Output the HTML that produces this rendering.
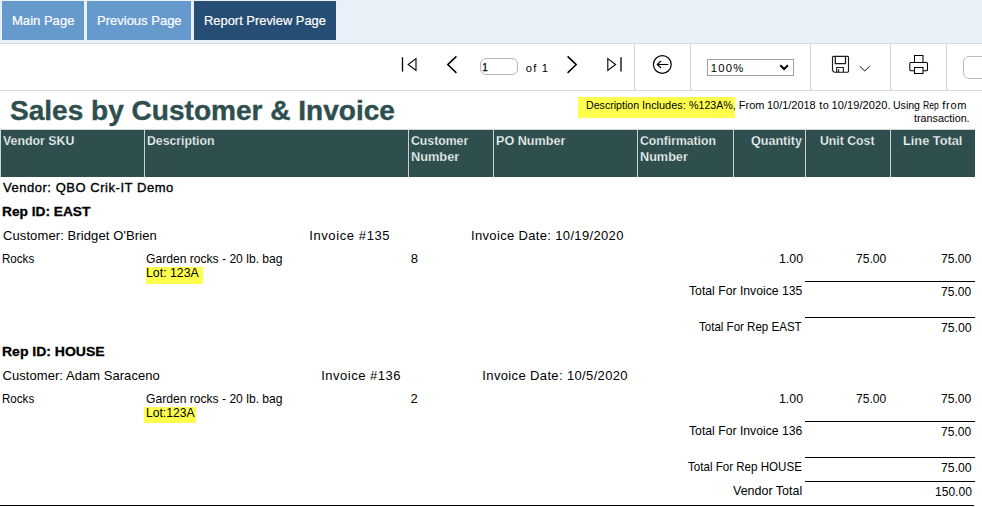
<!DOCTYPE html>
<html><head><meta charset="utf-8">
<style>
html,body{margin:0;padding:0;}
body{width:982px;height:507px;overflow:hidden;background:#fff;position:relative;font-family:"Liberation Sans",sans-serif;color:#000;}
.a{position:absolute;}
.t{position:absolute;white-space:pre;}
.tab{position:absolute;top:1px;height:39px;background:#6699cc;}
.sep{position:absolute;top:44px;width:1px;height:46px;background:#d4d4d4;}
.hl{position:absolute;background:#ffff4d;}
.th{position:absolute;top:130px;height:47px;background:#2f4f4f;}
.line{position:absolute;height:1px;background:#000;}
</style></head><body>
<div class="a" style="left:0;top:0;width:982px;height:43px;background:#eaf0f8;"></div>
<div class="tab" style="left:2px;width:82px;"></div>
<div class="tab" style="left:87px;width:104px;"></div>
<div class="tab" style="left:194px;width:142px;background:#264d73;"></div>
<div class="a" style="left:0;top:43px;width:982px;height:1px;background:#dcdcdc;"></div>
<div class="a" style="left:0;top:90px;width:982px;height:1px;background:#d9d9d9;"></div>
<div class="sep" style="left:634px"></div>
<div class="sep" style="left:690px"></div>
<div class="sep" style="left:810px"></div>
<div class="sep" style="left:890px"></div>
<div class="sep" style="left:946px"></div>
<div class="a" style="left:480px;top:58px;width:38px;height:17px;border:1px solid #b8b8b8;border-radius:6px;box-sizing:border-box;background:#fff;"></div>
<div class="a" style="left:707px;top:59px;width:87px;height:17px;border:1px solid #a0a0a0;box-sizing:border-box;background:#fff;"></div>
<div class="a" style="left:963px;top:56px;width:40px;height:23px;border:1px solid #bdbdbd;border-radius:6px;box-sizing:border-box;background:#fff;"></div>
<svg class="a" style="left:0;top:0" width="982" height="100" viewBox="0 0 982 100" fill="none" stroke="#000" stroke-width="1.2">
 <path d="M402.5 57.2V71.6" stroke-width="1.3"/><path d="M416 58.6L408.2 64.5L416 70.4z" stroke-width="1.1"/>
 <path d="M456.4 56.4L447.8 64.6L456.4 72.9" stroke-width="1.5"/>
 <path d="M567.6 56.4L576.2 64.6L567.6 72.9" stroke-width="1.5"/>
 <path d="M621 57.2V71.6" stroke-width="1.3"/><path d="M607.8 58.6L615.6 64.5L607.8 70.4z" stroke-width="1.1"/>
 <circle cx="662.3" cy="64.5" r="8.9" stroke-width="1.2"/><path d="M668.3 64.5H657.3M661 61L657.3 64.5L661 68" stroke-width="1.2"/>
 <path d="M780.3 65.3L784.1 69L787.9 65.3" stroke-width="2"/>
 <g stroke="#1c1c1c" stroke-width="1.15">
  <path d="M833.5 56.4H847.6a.9 .9 0 0 1 .9 .9V71.3a.9 .9 0 0 1 -.9 .9H834.3L832.5 70.5V57.4a1 1 0 0 1 1 -1z"/>
  <path d="M835.3 56.4V63.6H845.5V56.4" stroke-width="1.25"/>
  <path d="M836.7 72.2V67.5H843.4V72.2"/>
  <path d="M838.6 69.3V72.2"/>
 </g>
 <path d="M859.8 66.2L864.75 70.9L869.7 66.2" stroke-width="1" stroke="#111"/>
 <g stroke-width="1.05">
  <path d="M914.5 62.5V55.5H923V62.5"/>
  <rect x="909.8" y="62.5" width="17.7" height="8.2" rx="1"/>
  <rect x="914.5" y="67.5" width="8.5" height="6" fill="#fff"/>
 </g>
</svg>
<div class="hl" style="left:578px;top:97px;width:157px;height:21px;"></div>
<div class="th" style="left:0;width:975px;"></div>
<div class="a" style="left:0;top:129px;width:976px;height:1px;background:#d0d3d3;"></div>
<div class="a" style="left:0;top:129px;width:1px;height:48px;background:#d0d3d3;"></div>
<div class="a" style="left:144px;top:130px;width:1px;height:47px;background:#c8d0d0;"></div>
<div class="a" style="left:408px;top:130px;width:1px;height:47px;background:#c8d0d0;"></div>
<div class="a" style="left:493px;top:130px;width:1px;height:47px;background:#c8d0d0;"></div>
<div class="a" style="left:637px;top:130px;width:1px;height:47px;background:#c8d0d0;"></div>
<div class="a" style="left:733px;top:130px;width:1px;height:47px;background:#c8d0d0;"></div>
<div class="a" style="left:805px;top:130px;width:1px;height:47px;background:#c8d0d0;"></div>
<div class="a" style="left:890px;top:130px;width:1px;height:47px;background:#c8d0d0;"></div>
<div class="hl" style="left:146px;top:267px;width:57px;height:17px;"></div>
<div class="hl" style="left:144px;top:407px;width:52px;height:16px;"></div>
<div class="line" style="left:805px;top:281px;width:170px;"></div>
<div class="line" style="left:805px;top:317px;width:170px;"></div>
<div class="line" style="left:805px;top:421px;width:170px;"></div>
<div class="line" style="left:805px;top:457px;width:170px;"></div>
<div class="line" style="left:805px;top:481px;width:170px;"></div>
<div class="line" style="left:0;top:505px;width:974px;"></div>
<div class="t" style="left:11.78px;top:12.68px;font-size:13.33px;line-height:16px;letter-spacing:0.000px;color:#fff;-webkit-text-stroke:0.2px #fff;transform:scaleX(0.9792);transform-origin:0 0;">Main Page</div>
<div class="t" style="left:96.68px;top:12.68px;font-size:13.33px;line-height:16px;letter-spacing:0.000px;color:#fff;-webkit-text-stroke:0.2px #fff;transform:scaleX(0.9760);transform-origin:0 0;">Previous Page</div>
<div class="t" style="left:203.97px;top:12.68px;font-size:13.33px;line-height:16px;letter-spacing:0.000px;color:#fff;-webkit-text-stroke:0.2px #fff;transform:scaleX(0.9683);transform-origin:0 0;">Report Preview Page</div>
<div class="t" style="left:482.26px;top:61.83px;font-size:10px;line-height:12px;letter-spacing:0.000px;-webkit-text-stroke:0.25px #000;">1</div>
<div class="t" style="left:525.87px;top:61.92px;font-size:11.2px;line-height:13px;letter-spacing:1.135px;">of 1</div>
<div class="t" style="left:710.78px;top:61.38px;font-size:11.3px;line-height:14px;letter-spacing:1.230px;">100%</div>
<div class="t" style="left:9.63px;top:94.94px;font-size:27px;line-height:32px;letter-spacing:0.000px;font-weight:bold;color:#2f4f4f;-webkit-text-stroke:0.4px #2f4f4f;transform:scaleX(1.0385);transform-origin:0 0;">Sales by Customer &amp; Invoice</div>
<div class="t" style="left:585.67px;top:98.99px;font-size:11px;line-height:13px;letter-spacing:0.000px;transform:scaleX(0.9657);transform-origin:0 0;">Description</div>
<div class="t" style="left:641.71px;top:98.99px;font-size:11px;line-height:13px;letter-spacing:0.000px;transform:scaleX(0.9947);transform-origin:0 0;">Includes:</div>
<div class="t" style="left:688.76px;top:98.99px;font-size:11px;line-height:13px;letter-spacing:0.000px;transform:scaleX(0.9681);transform-origin:0 0;">%123A%,</div>
<div class="t" style="left:738.63px;top:98.99px;font-size:11px;line-height:13px;letter-spacing:0.078px;">From</div>
<div class="t" style="left:766.75px;top:98.99px;font-size:11px;line-height:13px;letter-spacing:0.000px;transform:scaleX(0.9935);transform-origin:0 0;">10/1/2018</div>
<div class="t" style="left:819.27px;top:98.99px;font-size:11px;line-height:13px;letter-spacing:0.490px;">to</div>
<div class="t" style="left:831.54px;top:98.99px;font-size:11px;line-height:13px;letter-spacing:0.082px;">10/19/2020.</div>
<div class="t" style="left:892.70px;top:98.99px;font-size:11px;line-height:13px;letter-spacing:0.000px;transform:scaleX(0.9598);transform-origin:0 0;">Using</div>
<div class="t" style="left:922.87px;top:98.99px;font-size:11px;line-height:13px;letter-spacing:0.000px;transform:scaleX(0.7779);transform-origin:0 0;">Rep</div>
<div class="t" style="left:942.25px;top:98.99px;font-size:11px;line-height:13px;letter-spacing:0.757px;">from</div>
<div class="t" style="left:914.01px;top:111.99px;font-size:11px;line-height:13px;letter-spacing:0.000px;transform:scaleX(0.9780);transform-origin:0 0;">transaction.</div>
<div class="t" style="left:3.29px;top:132.80px;font-size:13px;line-height:16px;letter-spacing:0.000px;font-weight:bold;color:#f4f7f7;-webkit-text-stroke:0.25px #2f4f4f;transform:scaleX(0.9503);transform-origin:0 0;">Vendor SKU</div>
<div class="t" style="left:146.86px;top:132.80px;font-size:13px;line-height:16px;letter-spacing:0.000px;font-weight:bold;color:#f4f7f7;-webkit-text-stroke:0.25px #2f4f4f;transform:scaleX(0.9442);transform-origin:0 0;">Description</div>
<div class="t" style="left:411.15px;top:132.80px;font-size:13px;line-height:16px;letter-spacing:0.000px;font-weight:bold;color:#f4f7f7;-webkit-text-stroke:0.25px #2f4f4f;transform:scaleX(0.9428);transform-origin:0 0;">Customer</div>
<div class="t" style="left:411.15px;top:148.80px;font-size:13px;line-height:16px;letter-spacing:0.000px;font-weight:bold;color:#f4f7f7;-webkit-text-stroke:0.25px #2f4f4f;transform:scaleX(0.9811);transform-origin:0 0;">Number</div>
<div class="t" style="left:495.86px;top:132.80px;font-size:13px;line-height:16px;letter-spacing:0.000px;font-weight:bold;color:#f4f7f7;-webkit-text-stroke:0.25px #2f4f4f;transform:scaleX(0.9688);transform-origin:0 0;">PO Number</div>
<div class="t" style="left:640.16px;top:132.80px;font-size:13px;line-height:16px;letter-spacing:0.000px;font-weight:bold;color:#f4f7f7;-webkit-text-stroke:0.25px #2f4f4f;transform:scaleX(0.9384);transform-origin:0 0;">Confirmation</div>
<div class="t" style="left:640.34px;top:148.80px;font-size:13px;line-height:16px;letter-spacing:0.000px;font-weight:bold;color:#f4f7f7;-webkit-text-stroke:0.25px #2f4f4f;transform:scaleX(0.9736);transform-origin:0 0;">Number</div>
<div class="t" style="left:750.70px;top:132.80px;font-size:13px;line-height:16px;letter-spacing:0.000px;font-weight:bold;color:#f4f7f7;-webkit-text-stroke:0.25px #2f4f4f;transform:scaleX(0.9667);transform-origin:0 0;">Quantity</div>
<div class="t" style="left:819.78px;top:132.80px;font-size:13px;line-height:16px;letter-spacing:0.000px;font-weight:bold;color:#f4f7f7;-webkit-text-stroke:0.25px #2f4f4f;transform:scaleX(0.9433);transform-origin:0 0;">Unit Cost</div>
<div class="t" style="left:903.05px;top:132.80px;font-size:13px;line-height:16px;letter-spacing:0.000px;font-weight:bold;color:#f4f7f7;-webkit-text-stroke:0.25px #2f4f4f;transform:scaleX(0.9835);transform-origin:0 0;">Line Total</div>
<div class="t" style="left:2.94px;top:179.80px;font-size:13px;line-height:16px;letter-spacing:0.536px;-webkit-text-stroke:0.35px #000;">Vendor: QBO Crik-IT Demo</div>
<div class="t" style="left:1.72px;top:203.80px;font-size:13px;line-height:16px;letter-spacing:0.000px;font-weight:bold;-webkit-text-stroke:0.3px #000;transform:scaleX(1.0545);transform-origin:0 0;">Rep ID: EAST</div>
<div class="t" style="left:2.99px;top:227.80px;font-size:13px;line-height:16px;letter-spacing:0.102px;">Customer: Bridget O'Brien</div>
<div class="t" style="left:309.17px;top:227.80px;font-size:13px;line-height:16px;letter-spacing:0.610px;">Invoice #135</div>
<div class="t" style="left:470.99px;top:227.80px;font-size:13px;line-height:16px;letter-spacing:0.342px;">Invoice Date: 10/19/2020</div>
<div class="t" style="left:1.85px;top:250.80px;font-size:13px;line-height:16px;letter-spacing:0.000px;transform:scaleX(0.8919);transform-origin:0 0;">Rocks</div>
<div class="t" style="left:146.08px;top:250.80px;font-size:13px;line-height:16px;letter-spacing:0.000px;transform:scaleX(0.9309);transform-origin:0 0;">Garden rocks - 20 lb. bag</div>
<div class="t" style="left:145.99px;top:264.80px;font-size:13px;line-height:16px;letter-spacing:0.000px;transform:scaleX(0.9487);transform-origin:0 0;">Lot: 123A</div>
<div class="t" style="left:410.87px;top:250.80px;font-size:13px;line-height:16px;letter-spacing:0.000px;">8</div>
<div class="t" style="left:778.55px;top:250.80px;font-size:13px;line-height:16px;letter-spacing:0.000px;transform:scaleX(0.9485);transform-origin:0 0;">1.00</div>
<div class="t" style="left:855.84px;top:250.80px;font-size:13px;line-height:16px;letter-spacing:0.000px;transform:scaleX(0.9297);transform-origin:0 0;">75.00</div>
<div class="t" style="left:941.27px;top:250.80px;font-size:13px;line-height:16px;letter-spacing:0.000px;transform:scaleX(0.9322);transform-origin:0 0;">75.00</div>
<div class="t" style="left:688.75px;top:282.80px;font-size:13px;line-height:16px;letter-spacing:0.000px;transform:scaleX(0.9391);transform-origin:0 0;">Total For Invoice 135</div>
<div class="t" style="left:941.05px;top:283.80px;font-size:13px;line-height:16px;letter-spacing:0.000px;transform:scaleX(0.9257);transform-origin:0 0;">75.00</div>
<div class="t" style="left:698.73px;top:318.80px;font-size:13px;line-height:16px;letter-spacing:0.000px;transform:scaleX(0.8878);transform-origin:0 0;">Total For Rep EAST</div>
<div class="t" style="left:941.05px;top:319.80px;font-size:13px;line-height:16px;letter-spacing:0.000px;transform:scaleX(0.9427);transform-origin:0 0;">75.00</div>
<div class="t" style="left:1.72px;top:343.80px;font-size:13px;line-height:16px;letter-spacing:0.000px;font-weight:bold;-webkit-text-stroke:0.3px #000;transform:scaleX(1.0759);transform-origin:0 0;">Rep ID: HOUSE</div>
<div class="t" style="left:2.58px;top:367.80px;font-size:13px;line-height:16px;letter-spacing:0.048px;">Customer: Adam Saraceno</div>
<div class="t" style="left:321.17px;top:367.80px;font-size:13px;line-height:16px;letter-spacing:0.516px;">Invoice #136</div>
<div class="t" style="left:482.37px;top:367.80px;font-size:13px;line-height:16px;letter-spacing:0.360px;">Invoice Date: 10/5/2020</div>
<div class="t" style="left:1.85px;top:390.80px;font-size:13px;line-height:16px;letter-spacing:0.000px;transform:scaleX(0.8919);transform-origin:0 0;">Rocks</div>
<div class="t" style="left:146.08px;top:390.80px;font-size:13px;line-height:16px;letter-spacing:0.000px;transform:scaleX(0.9309);transform-origin:0 0;">Garden rocks - 20 lb. bag</div>
<div class="t" style="left:145.92px;top:404.80px;font-size:13px;line-height:16px;letter-spacing:0.000px;transform:scaleX(0.9322);transform-origin:0 0;">Lot:123A</div>
<div class="t" style="left:410.52px;top:390.80px;font-size:13px;line-height:16px;letter-spacing:0.000px;">2</div>
<div class="t" style="left:778.55px;top:390.80px;font-size:13px;line-height:16px;letter-spacing:0.000px;transform:scaleX(0.9485);transform-origin:0 0;">1.00</div>
<div class="t" style="left:855.84px;top:390.80px;font-size:13px;line-height:16px;letter-spacing:0.000px;transform:scaleX(0.9297);transform-origin:0 0;">75.00</div>
<div class="t" style="left:941.27px;top:390.80px;font-size:13px;line-height:16px;letter-spacing:0.000px;transform:scaleX(0.9322);transform-origin:0 0;">75.00</div>
<div class="t" style="left:688.75px;top:422.80px;font-size:13px;line-height:16px;letter-spacing:0.000px;transform:scaleX(0.9393);transform-origin:0 0;">Total For Invoice 136</div>
<div class="t" style="left:941.05px;top:423.80px;font-size:13px;line-height:16px;letter-spacing:0.000px;transform:scaleX(0.9257);transform-origin:0 0;">75.00</div>
<div class="t" style="left:688.20px;top:458.80px;font-size:13px;line-height:16px;letter-spacing:0.000px;transform:scaleX(0.8905);transform-origin:0 0;">Total For Rep HOUSE</div>
<div class="t" style="left:941.05px;top:459.80px;font-size:13px;line-height:16px;letter-spacing:0.000px;transform:scaleX(0.9427);transform-origin:0 0;">75.00</div>
<div class="t" style="left:732.85px;top:482.80px;font-size:13px;line-height:16px;letter-spacing:0.000px;transform:scaleX(0.9609);transform-origin:0 0;">Vendor Total</div>
<div class="t" style="left:934.64px;top:483.80px;font-size:13px;line-height:16px;letter-spacing:0.000px;transform:scaleX(0.9270);transform-origin:0 0;">150.00</div>
</body></html>
